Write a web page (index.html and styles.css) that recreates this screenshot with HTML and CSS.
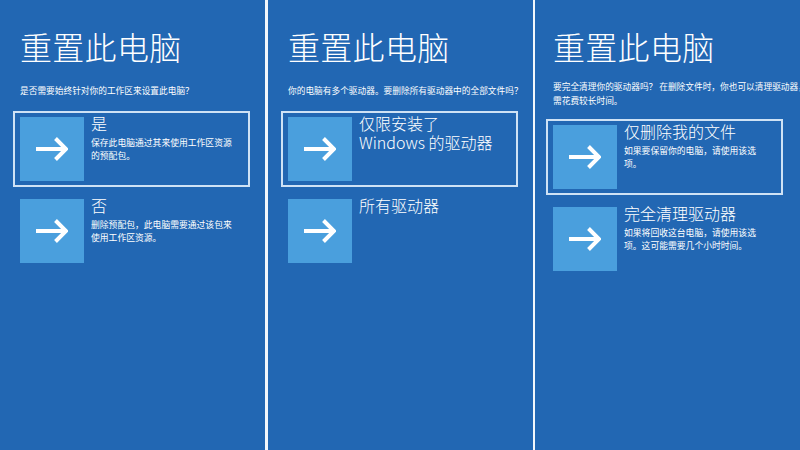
FILE: index.html
```html
<!DOCTYPE html>
<html lang="zh-CN">
<head>
<meta charset="utf-8">
<title>重置此电脑</title>
<link rel="stylesheet" href="styles.css">
</head>
<body>
<div class="screens">
  <section class="panel">
    <h1 class="panel__title">重置此电脑</h1>
    <p class="panel__prompt">是否需要始终针对你的工作区来设置此电脑？</p>
    <ul class="options">
      <li class="option option--selected">
        <span class="option__icon"><svg viewBox="0 0 32 24" width="32" height="24"><path d="M0 12H29M19.5 1.5L30 12L19.5 22.5"/></svg></span>
        <div class="option__text">
          <div class="option__title">是</div>
          <div class="option__desc">保存此电脑通过其来使用工作区资源的预配包。</div>
        </div>
      </li>
      <li class="option">
        <span class="option__icon"><svg viewBox="0 0 32 24" width="32" height="24"><path d="M0 12H29M19.5 1.5L30 12L19.5 22.5"/></svg></span>
        <div class="option__text">
          <div class="option__title">否</div>
          <div class="option__desc">删除预配包，此电脑需要通过该包来使用工作区资源。</div>
        </div>
      </li>
    </ul>
  </section>
  <div class="divider"></div>
  <section class="panel">
    <h1 class="panel__title">重置此电脑</h1>
    <p class="panel__prompt">你的电脑有多个驱动器。要删除所有驱动器中的全部文件吗？</p>
    <ul class="options">
      <li class="option option--selected">
        <span class="option__icon"><svg viewBox="0 0 32 24" width="32" height="24"><path d="M0 12H29M19.5 1.5L30 12L19.5 22.5"/></svg></span>
        <div class="option__text">
          <div class="option__title">仅限安装了<br>Windows 的驱动器</div>
        </div>
      </li>
      <li class="option">
        <span class="option__icon"><svg viewBox="0 0 32 24" width="32" height="24"><path d="M0 12H29M19.5 1.5L30 12L19.5 22.5"/></svg></span>
        <div class="option__text">
          <div class="option__title">所有驱动器</div>
        </div>
      </li>
    </ul>
  </section>
  <div class="divider"></div>
  <section class="panel panel--last">
    <h1 class="panel__title">重置此电脑</h1>
    <p class="panel__prompt panel__prompt--long">要完全清理你的驱动器吗？ 在删除文件时，你也可以清理驱动器，<br>需花费较长时间。</p>
    <ul class="options">
      <li class="option option--selected">
        <span class="option__icon"><svg viewBox="0 0 32 24" width="32" height="24"><path d="M0 12H29M19.5 1.5L30 12L19.5 22.5"/></svg></span>
        <div class="option__text">
          <div class="option__title">仅删除我的文件</div>
          <div class="option__desc">如果要保留你的电脑，请使用该选项。</div>
        </div>
      </li>
      <li class="option">
        <span class="option__icon"><svg viewBox="0 0 32 24" width="32" height="24"><path d="M0 12H29M19.5 1.5L30 12L19.5 22.5"/></svg></span>
        <div class="option__text">
          <div class="option__title">完全清理驱动器</div>
          <div class="option__desc">如果将回收这台电脑，请使用该选项。这可能需要几个小时时间。</div>
        </div>
      </li>
    </ul>
  </section>
</div>
</body>
</html>
```

FILE: styles.css
```css
html, body {
  margin: 0;
  padding: 0;
  width: 800px;
  height: 450px;
  overflow: hidden;
  background: #2267b3;
}

.screens {
  display: grid;
  grid-template-columns: 265px 3px 265px 2px 265px;
  height: 450px;
  font-family: "Noto Sans CJK SC", "Noto Sans", sans-serif;
  color: #ffffff;
}

.divider {
  background: #f2f7fc;
}

.panel {
  padding: 26px 0 0 20px;
  overflow: hidden;
  background: #2267b3;
}

.panel--last {
  padding-left: 18px;
}

.panel__title {
  margin: 0;
  font-size: 32px;
  line-height: 40px;
  font-weight: 300;
  letter-spacing: 0.3px;
}

.panel__prompt {
  margin: 18px 0 0;
  font-size: 8.7px;
  line-height: 13px;
  font-weight: 400;
  white-space: nowrap;
}

.panel__prompt--long {
  margin-top: 14px;
  line-height: 13.5px;
}

.options {
  list-style: none;
  margin: 14px 0 0 -7px;
  padding: 0;
  display: flex;
  flex-direction: column;
  gap: 6px;
}

.panel--last .options {
  margin-top: 12px;
}

.option {
  box-sizing: border-box;
  width: 237px;
  display: flex;
  align-items: flex-start;
  padding: 4px 5px;
  border: 2px solid transparent;
}

.option--selected {
  border-color: #cfe2f5;
}

.option__icon {
  flex: none;
  width: 64px;
  height: 64px;
  background: #4a9fdd;
  display: flex;
  align-items: center;
  justify-content: center;
}

.option__icon svg {
  display: block;
  fill: none;
  stroke: #ffffff;
  stroke-width: 4;
  stroke-linejoin: miter;
}

.option__text {
  flex: none;
  width: 146px;
  margin: -3px 0 0 7px;
}

.option__title {
  font-size: 16px;
  line-height: 19px;
  font-weight: 300;
}

.option__desc {
  margin-top: 3px;
  font-size: 8.8px;
  line-height: 13px;
  font-weight: 400;
}
```
